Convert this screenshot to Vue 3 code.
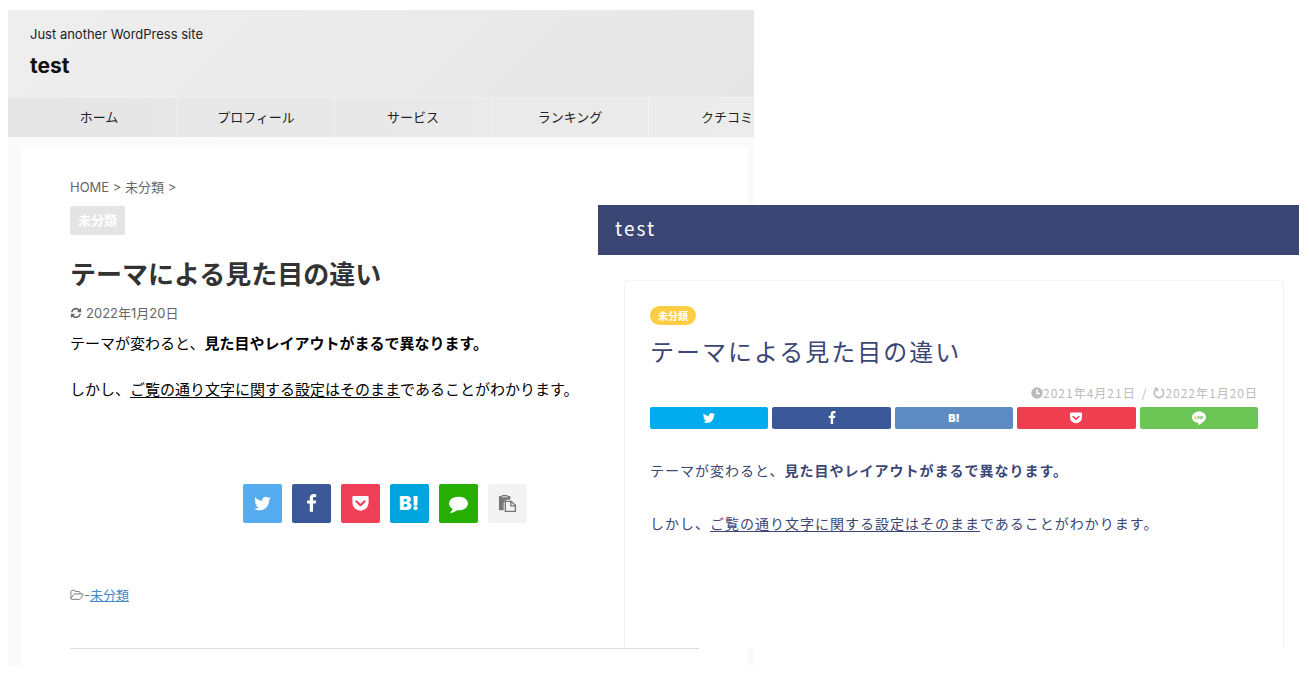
<script setup>
const menu = ['ホーム', 'プロフィール', 'サービス', 'ランキング', 'クチコミ']

const icons = {
  twitter: 'M1684 408q-67 98-162 167 1 14 1 42 0 130-38 259.5t-115.5 248.5-184.5 210.5-258 146-323 54.5q-271 0-496-145 35 4 78 4 225 0 401-138-105-2-188-64.5t-114-159.5q33 5 61 5 43 0 85-11-112-23-185.5-111.5t-73.5-205.5v-4q68 38 146 41-66-44-105-115t-39-154q0-88 44-163 121 149 294.5 238.5t371.5 99.5q-8-38-8-74 0-134 94.5-228.5t228.5-94.5q140 0 236 102 109-21 205-78-37 115-142 178 93-10 186-50z',
  facebook: 'M1343 12v264h-157q-86 0-116 36t-30 108v189h293l-39 296h-254v759h-306v-759h-255v-296h255v-218q0-186 104-288.5t277-102.5q147 0 228 12z',
  pocket: 'M260 180h1272q130 0 130 130v500q0 320-225 545t-541 225-541-225-225-545v-500q0-130 130-130zM520 600q-75 0-98 62t30 116l364 348q80 76 160 0l364-348q53-54 30-116t-98-62q-45 0-76 30l-300 288-300-288q-31-30-76-30z',
  comment: 'M1792 896q0 174-120 321.5t-326 233-450 85.5q-70 0-145-8-198 175-460 242-49 14-114 22-17 2-30.5-9t-17.500-29v-1q-3-4-.5-12t2-10 4.500-9.500l6-9 7-8.500 8-9q7-8 31-34.500t34.500-38 31-39.500 32.500-51 27-59 26-76q-157-89-247.500-220t-90.500-281q0-174 120-321.500t326-233 450-85.500 450 85.500 326 233 120 321.500z',
  refresh: 'M1639 1056q0 5-1 7-64 268-268 434.5t-478 166.5q-146 0-282.5-55t-243.5-157l-129 129q-19 19-45 19t-45-19-19-45v-448q0-26 19-45t45-19h448q26 0 45 19t19 45-19 45l-137 137q71 66 161 102t187 36q134 0 250-65t186-179q11-17 53-117 8-23 30-23h192q13 0 22.500 9.500t9.500 22.500zm25-800v448q0 26-19 45t-45 19h-448q-26 0-45-19t-19-45 19-45l138-138q-148-137-349-137-134 0-250 65t-186 179q-11 17-53 117-8 23-30 23h-199q-13 0-22.500-9.500t-9.500-22.500v-7q65-268 270-434.500t480-166.500q146 0 284 55.500t245 156.500l130-129q19-19 45-19t45 19 19 45z',
}

const tiles = [
  { name: 'twitter', label: 'Twitter' },
  { name: 'facebook', label: 'Facebook' },
  { name: 'pocket', label: 'Pocket' },
  { name: 'hatena', label: 'はてなブックマーク' },
  { name: 'comment', label: 'LINE' },
  { name: 'paste', label: 'コピー' },
]

const bars = [
  { name: 'twitter', label: 'Twitter' },
  { name: 'facebook', label: 'Facebook' },
  { name: 'hatena', label: 'はてなブックマーク' },
  { name: 'pocket', label: 'Pocket' },
  { name: 'line', label: 'LINE' },
]
</script>

<template>
  <div class="page">
    <section class="back">
      <header class="back-header">
        <p class="tagline">Just another WordPress site</p>
        <p class="back-title">test</p>
      </header>
      <nav class="menu">
        <a v-for="item in menu" :key="item" href="#">{{ item }}</a>
      </nav>
      <div class="back-body">
        <article class="back-card">
          <p class="crumbs"><a href="#">HOME</a> &gt; <a href="#">未分類</a> &gt;</p>
          <a class="tag" href="#">未分類</a>
          <h1>テーマによる見た目の違い</h1>
          <p class="updated">
            <svg viewBox="0 0 1792 1792"><path :d="icons.refresh" /></svg>
            <time>2022年1月20日</time>
          </p>
          <p class="text">テーマが変わると、<strong>見た目やレイアウトがまるで異なります。</strong></p>
          <p class="text">しかし、<u>ご覧の通り文字に関する設定はそのまま</u>であることがわかります。</p>
          <div class="tiles">
            <button v-for="t in tiles" :key="t.name" type="button" :class="['tile', t.name]" :aria-label="t.label">
              <span v-if="t.name === 'hatena'">B!</span>
              <svg v-else-if="t.name === 'paste'" viewBox="0 0 20 20">
                <path d="M1 2h3V1h6v1h3v4H9L6 9v8H1z" />
                <path class="slot" d="M4 3h6" />
                <path class="sheet" d="M7.700 7.700h6.300l4.300 4.300v6.300H7.700zM13.500 7.700v4.800h4.800" />
              </svg>
              <svg v-else viewBox="0 0 1792 1792"><path fill-rule="evenodd" :d="icons[t.name]" /></svg>
            </button>
          </div>
          <p class="category">
            <svg viewBox="0 0 15 12"><path d="M1 9.500V2.200Q1 1 2.200 1h2.300q1.100 0 1.100 1.200h3.900q1.200 0 1.200 1.200v1.400M1 10l2.600-4.200q.6-1 1.700-1h8.200q1 0 .4 1l-2.200 3.700q-.7 1.200-1.800 1.200H2q-1 0-1-1.200" /></svg>
            <span>-</span><a href="#">未分類</a>
          </p>
          <hr />
        </article>
      </div>
    </section>

    <section class="front">
      <header class="front-header">test</header>
      <article class="front-card">
        <a class="pill" href="#">未分類</a>
        <h2>テーマによる見た目の違い</h2>
        <p class="dates">
          <svg viewBox="0 0 12 12"><circle cx="6" cy="6" r="5.700" /><path class="hands" d="M6 2.500V6.500h3" /></svg>
          <time>2021年4月21日</time>
          <span class="slash">/</span>
          <svg viewBox="0 0 12 12"><path class="arc" d="M8.200 1.800A4.700 4.700 0 1 1 3 2.300" /><path d="M.8.700h4.400v4.400z" /></svg>
          <time>2022年1月20日</time>
        </p>
        <div class="bars">
          <button v-for="b in bars" :key="b.name" type="button" :class="['bar', b.name]" :aria-label="b.label">
            <span v-if="b.name === 'hatena'">B!</span>
            <svg v-else-if="b.name === 'line'" viewBox="0 0 24 24">
              <path d="M12 1C5.400 1 0 5.300 0 10.600c0 4.800 4.300 8.800 10 9.500 1.500.3.900 1.500.7 3.300 0 .8.500.8 1.300.3 3-1.700 12-7 12-13.100C24 5.300 18.600 1 12 1z" />
              <text x="12" y="13.500" text-anchor="middle">LINE</text>
            </svg>
            <svg v-else viewBox="0 0 1792 1792"><path fill-rule="evenodd" :d="icons[b.name]" /></svg>
          </button>
        </div>
        <p class="copy">テーマが変わると、<strong>見た目やレイアウトがまるで異なります。</strong></p>
        <p class="copy">しかし、<u>ご覧の通り文字に関する設定はそのまま</u>であることがわかります。</p>
      </article>
    </section>
  </div>
</template>

<style>
body { background: #fff; }
</style>

<style scoped>
.page {
  position: relative;
  padding: 10px 8px 6px;
  font-family: Inter, "Noto Sans CJK JP", sans-serif;
}
p, h1, h2 { margin: 0; }
a { color: inherit; text-decoration: none; }
button { border: 0; padding: 0; font-family: inherit; color: #fff; cursor: pointer; }
svg { fill: currentColor; }

.back { width: 57vw; overflow: hidden; background: #fafafa; }
.back-header {
  padding: 14px 22px 15px;
  background: linear-gradient(135deg, #eee, #e6e6e6);
  color: #111;
}
.tagline { font-size: 13px; line-height: 20px; color: #222; white-space: nowrap; }
.back-title { margin-top: 6px; font-size: 21px; line-height: 32px; font-weight: 700; }
.menu {
  display: flex;
  padding-left: 13px;
  border-top: 1px solid #f0f0f0;
  background: linear-gradient(90deg, #e5e5e5, #ececec);
}
.menu a {
  flex: 0 0 157px;
  box-sizing: border-box;
  border-right: 1px solid #f2f2f2;
  font-size: 13px;
  line-height: 39px;
  text-align: center;
  white-space: nowrap;
  color: #222;
}
.back-body { padding: 10px 6px 0 13px; }
.back-card { padding: 30px 49px 17px; border-radius: 3px 3px 0 0; background: #fff; }
.crumbs { font-size: 13px; line-height: 20px; color: #666; }
.tag {
  display: inline-block;
  margin-top: 9px;
  padding: 0 8px;
  border-radius: 2px;
  background: #e4e4e4;
  color: #fff;
  font-size: 13px;
  line-height: 29px;
  font-weight: 700;
  vertical-align: top;
}
h1 { margin-top: 20px; font-size: 26px; line-height: 40px; color: #333; white-space: nowrap; }
.updated {
  display: flex;
  align-items: center;
  gap: 4px;
  margin-top: 8px;
  font-size: 13px;
  line-height: 20px;
  color: #666;
}
.updated svg { width: 12px; height: 12px; }
.text { margin-top: 9px; font-size: 15px; line-height: 24px; color: #000; white-space: nowrap; }
.text + .text { margin-top: 22px; }
u { text-underline-offset: 2px; }
.tiles { display: flex; justify-content: center; gap: 10px; margin-top: 82px; }
.tile {
  display: grid;
  place-items: center;
  width: 39px;
  height: 39px;
  border-radius: 2px;
}
.tile svg { width: 19px; height: 19px; }
.tile.twitter { background: #55acee; }
.tile.facebook { background: #3b5998; }
.tile.pocket { background: #ef3f56; }
.tile.hatena { background: #00a5de; font-size: 19px; font-weight: 900; }
.tile.comment { background: #26ae00; }
.tile.paste { background: #f3f3f3; color: #777; }
.slot { fill: none; stroke: #f3f3f3; }
.sheet { fill: #f3f3f3; stroke: currentColor; stroke-width: 1.400; }
.category {
  display: flex;
  align-items: center;
  margin-top: 62px;
  font-size: 13px;
  line-height: 20px;
  color: #777;
}
.category svg { width: 14px; height: 12px; fill: none; stroke: currentColor; }
.category a { color: #428bca; text-decoration: underline; }
hr { margin: 43px 0 0; border: 0; border-top: 1px solid #ddd; }

.front {
  position: absolute;
  top: 205px;
  right: 10px;
  left: 598px;
  background: #fff;
  color: #3b4675;
  font-family: "Noto Sans CJK JP", sans-serif;
}
.front-header {
  padding: 0 17px 4px;
  background: #3b4675;
  color: #fff;
  font-size: 19px;
  line-height: 46px;
  letter-spacing: 2px;
}
.front-card {
  margin: 25px 15px 0 26px;
  padding: 25px 25px 113px;
  border: 1px solid #f3f3f3;
  border-bottom: 0;
  border-radius: 4px 4px 0 0;
}
.pill {
  display: inline-block;
  padding: 0 8px;
  border-radius: 10px;
  background: #ffcd44;
  color: #fff;
  font-size: 10px;
  line-height: 19px;
  font-weight: 700;
  vertical-align: top;
}
h2 {
  margin-top: 1px;
  font-size: 24px;
  line-height: 40px;
  font-weight: 400;
  letter-spacing: 2px;
  white-space: nowrap;
}
.dates {
  display: flex;
  justify-content: flex-end;
  align-items: center;
  margin-top: 12px;
  font-size: 12px;
  line-height: 20px;
  letter-spacing: 1px;
  color: #bbb;
}
.dates svg { width: 12px; height: 12px; }
.slash { margin: 0 6px; }
.hands { fill: none; stroke: #fff; stroke-width: 1.500; }
.arc { fill: none; stroke: currentColor; stroke-width: 1.600; }
.bars { display: grid; grid-template-columns: repeat(5, 1fr); gap: 4px; margin-top: 4px; }
.bar { display: grid; place-items: center; height: 22px; border-radius: 2px; }
.bar svg { width: 14px; height: 14px; }
.bar text { fill: #6cc655; font: 700 7px Inter, sans-serif; }
.bar.twitter { background: #00acee; }
.bar.facebook { background: #3b5998; }
.bar.hatena { background: #5d8ac1; font: 900 11px Inter, sans-serif; }
.bar.pocket { background: #f03e51; }
.bar.line { background: #6cc655; }
.copy { margin-top: 29px; font-size: 14px; line-height: 24px; letter-spacing: 1px; white-space: nowrap; }
.copy + .copy { margin-top: 29px; }
</style>
